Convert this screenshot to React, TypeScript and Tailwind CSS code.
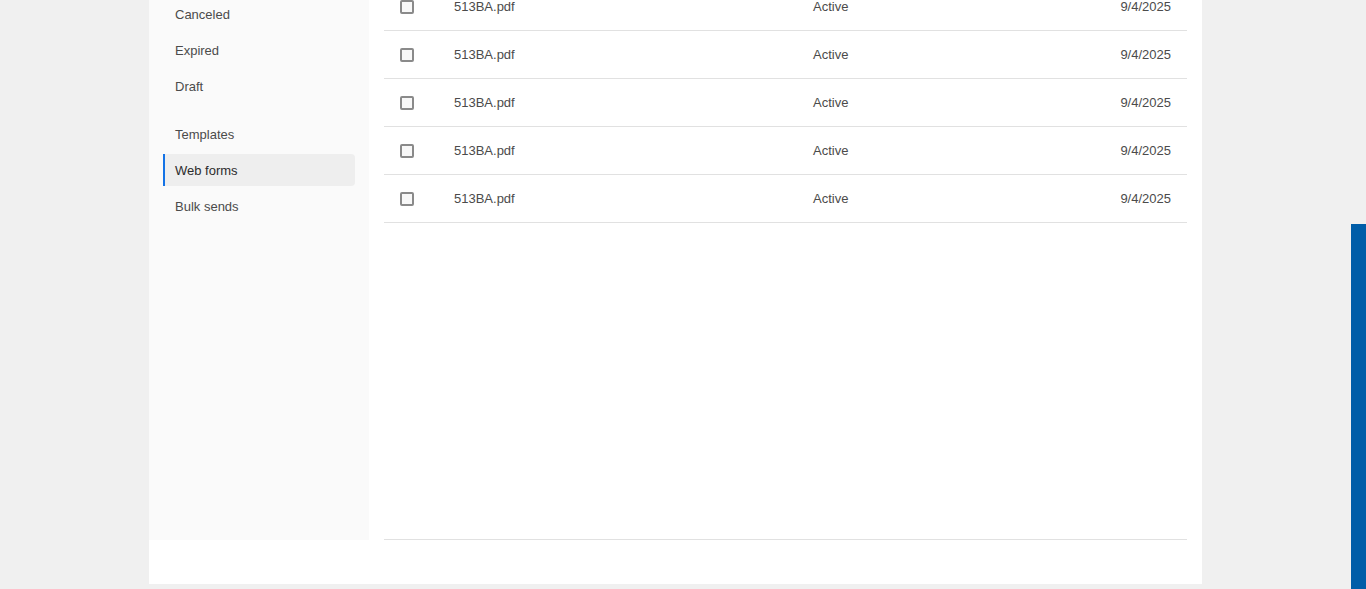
import React from "react";

const navTop = ["Canceled", "Expired", "Draft"];
const navBottom = ["Templates", "Web forms", "Bulk sends"];
const rows = [0, 1, 2, 3, 4];

function NavItem({ label, active }: { label: string; active?: boolean }) {
  return (
    <div
      className={
        "h-[32px] flex items-center pl-[10px] pt-[1px] mx-[14px] text-[13px] " +
        (active
          ? "bg-[#eeeeee] border-l-2 border-[#1473e6] rounded-r-[4px] text-[#2c2c2c]"
          : "border-l-2 border-transparent text-[#4b4b4b]")
      }
    >
      {label}
    </div>
  );
}

export default function App() {
  return (
    <div
      className="relative h-[589px] overflow-hidden bg-[#f0f0f0]"
      style={{ fontFamily: "'Liberation Sans', Arial, sans-serif" }}
    >
      <div className="ml-[149px] w-[1053px] -mt-[17px] bg-white pb-[44px] flex">
        <aside className="w-[220px] h-[557px] bg-[#fafafa] pt-[15px] flex flex-col gap-[4px]">
          {navTop.map((l) => (
            <NavItem key={l} label={l} />
          ))}
          <div className="h-[8px]" />
          {navBottom.map((l) => (
            <NavItem key={l} label={l} active={l === "Web forms"} />
          ))}
        </aside>
        <main className="flex-1 px-[15px]">
          <div className="h-[557px] border-b border-[#e1e1e1]">
            {rows.map((r) => (
              <div
                key={r}
                className="h-[48px] border-b border-[#e1e1e1] flex items-center text-[13px] text-[#4b4b4b]"
              >
                <div className="w-[70px] pl-[16px] flex items-center">
                  <div className="w-[14px] h-[14px] border-2 border-[#8a8a8a] rounded-[2px] bg-[#f8f8f8]" />
                </div>
                <div className="w-[359px]">513BA.pdf</div>
                <div className="flex-1">Active</div>
                <div className="pr-[16px] text-right">9/4/2025</div>
              </div>
            ))}
          </div>
        </main>
      </div>
      <div className="absolute right-0 top-[224px] w-[15px] h-[365px] bg-[#005da8]" />
    </div>
  );
}
